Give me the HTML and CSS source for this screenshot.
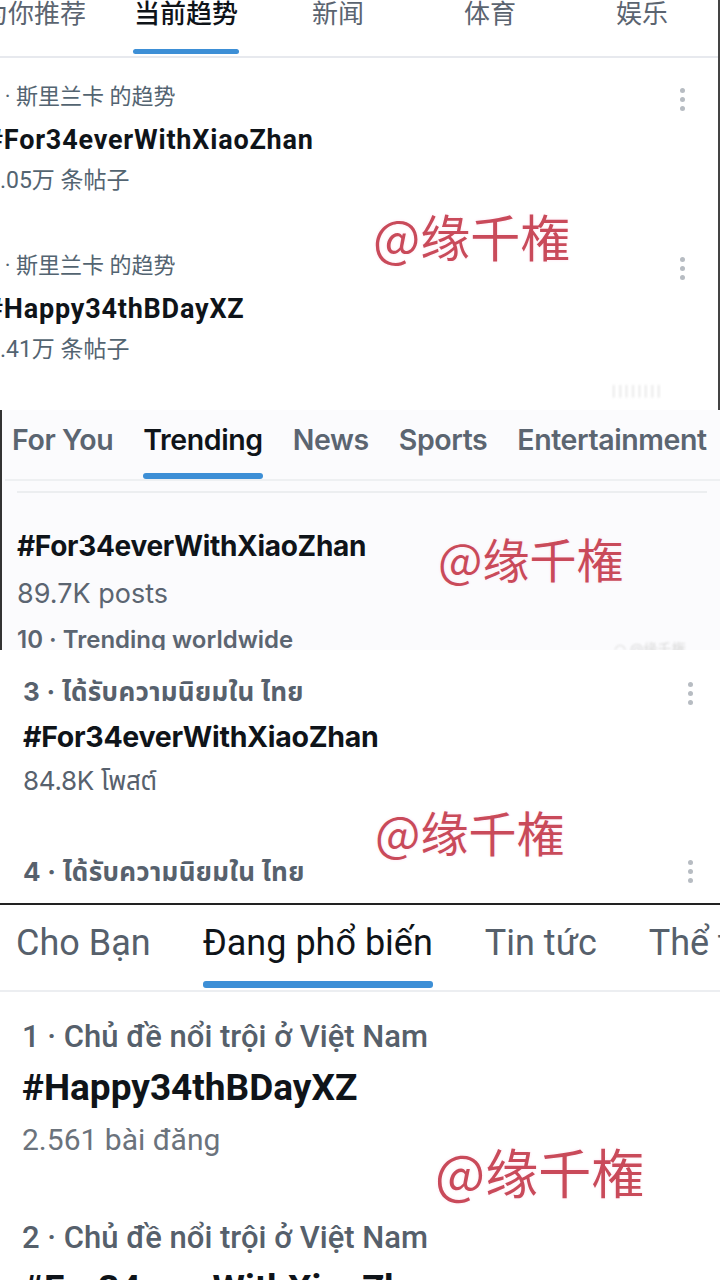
FILE: index.html
```html
<!DOCTYPE html>
<html lang="zh">
<head>
    <meta charset="UTF-8">
    <meta name="viewport" content="width=device-width, initial-scale=1.0">
    <title>Trending collage</title>
    <link rel="stylesheet" href="styles.css">
</head>
<body>

<!-- panel 1: chinese app -->
<section class="panel panel-cn">
    <div class="cn-tabs">
        <div class="cn-tab">为你推荐</div>
        <div class="cn-tab active">当前趋势<span class="bar"></span></div>
        <div class="cn-tab">新闻</div>
        <div class="cn-tab">体育</div>
        <div class="cn-tab">娱乐</div>
    </div>
    <div class="cn-list">
        <div class="cn-item">
            <div class="meta">1 · 斯里兰卡 的趋势</div>
            <div class="tag">#For34everWithXiaoZhan</div>
            <div class="count">2.05万 条帖子</div>
            <span class="dots"><i></i><i></i><i></i></span>
        </div>
        <div class="cn-item">
            <div class="meta">2 · 斯里兰卡 的趋势</div>
            <div class="tag">#Happy34thBDayXZ</div>
            <div class="count">1.41万 条帖子</div>
            <span class="dots"><i></i><i></i><i></i></span>
        </div>
    </div>
    <div class="mark mark-1">@缘千権</div>
    <div class="faint faint-1">||||||||</div>
</section>

<!-- panel 2: english -->
<section class="panel panel-en">
    <div class="en-tabs">
        <div class="en-tab">For You</div>
        <div class="en-tab active">Trending<span class="bar"></span></div>
        <div class="en-tab">News</div>
        <div class="en-tab">Sports</div>
        <div class="en-tab">Entertainment</div>
    </div>
    <div class="en-rule"></div>
    <div class="en-item">
        <div class="tag">#For34everWithXiaoZhan</div>
        <div class="count">89.7K posts</div>
        <div class="meta">10 · Trending worldwide</div>
    </div>
    <div class="mark mark-2">@缘千権</div>
    <div class="faint faint-2">◠ @缘千権</div>
</section>

<!-- panel 3: thai -->
<section class="panel panel-th">
    <div class="th-item">
        <div class="meta">3 · ได้รับความนิยมใน ไทย</div>
        <div class="tag">#For34everWithXiaoZhan</div>
        <div class="count">84.8K โพสต์</div>
        <span class="dots"><i></i><i></i><i></i></span>
    </div>
    <div class="th-item">
        <div class="meta">4 · ได้รับความนิยมใน ไทย</div>
        <span class="dots"><i></i><i></i><i></i></span>
    </div>
    <div class="mark mark-3">@缘千権</div>
</section>

<!-- panel 4: vietnamese -->
<section class="panel panel-vn">
    <div class="vn-tabs">
        <div class="vn-tab">Cho Bạn</div>
        <div class="vn-tab active">Đang phổ biến<span class="bar"></span></div>
        <div class="vn-tab">Tin tức</div>
        <div class="vn-tab">Thể thao</div>
    </div>
    <div class="vn-list">
        <div class="vn-item">
            <div class="meta">1 · Chủ đề nổi trội ở Việt Nam</div>
            <div class="tag">#Happy34thBDayXZ</div>
            <div class="count">2.561 bài đăng</div>
        </div>
        <div class="vn-item">
            <div class="meta">2 · Chủ đề nổi trội ở Việt Nam</div>
            <div class="tag">#For34everWithXiaoZhan</div>
        </div>
    </div>
    <div class="mark mark-4">@缘千権</div>
</section>

</body>
</html>
```

FILE: styles.css
```css
body {
    margin: 0;
    padding: 0;
    width: 720px;
    background-color: #fff;
    font-family: Roboto, "Noto Sans CJK SC", sans-serif;
    color: #0f1419;
}
.panel {
    position: relative;
    overflow: hidden;
    background-color: #fff;
}
.bar {
    display: block;
    flex-shrink: 0;
    height: 6px;
    border-radius: 3px;
    background-color: #3d8fd6;
}
.dots {
    position: absolute;
    display: flex;
    flex-direction: column;
    gap: 4px;
}
.dots i {
    width: 5px;
    height: 5px;
    border-radius: 50%;
    background-color: #b7bcc2;
}
.mark {
    position: absolute;
    font-family: "Noto Sans CJK SC", sans-serif;
    color: #c94a5a;
    text-shadow: 0 0 2px #fff, 0 0 3px #fde;
    white-space: nowrap;
}
.faint {
    position: absolute;
    color: #d8d8d8;
    font-size: 14px;
    filter: blur(1px);
    white-space: nowrap;
}

/* panel 1 */
.panel-cn {
    height: 410px;
    border-right: 2px solid #444;
    box-sizing: border-box;
}
.cn-tabs {
    display: grid;
    grid-template-columns: repeat(5, 152px);
    margin-left: -42px;
    height: 56px;
    border-bottom: 2px solid #e7e9ee;
}
.cn-tab {
    display: flex;
    flex-direction: column;
    align-items: center;
    font-size: 26px;
    line-height: 30px;
    margin-top: -1px;
    color: #5b6470;
}
.cn-tab.active {
    color: #0f1419;
    font-weight: 500;
}
.cn-tab .bar {
    width: 106px;
    margin-top: 20px;
    height: 5px;
}
.cn-list {
    margin-left: -13px;
    padding-top: 25px;
}
.cn-item {
    position: relative;
    height: 169px;
}
.cn-item .meta {
    font-size: 22px;
    line-height: 28px;
    color: #536471;
}
.cn-item .tag {
    font-size: 27px;
    font-weight: 700;
    line-height: 32px;
    letter-spacing: 0.8px;
    margin-top: 13px;
}
.cn-item .count {
    font-size: 23px;
    line-height: 28px;
    margin-top: 11px;
    color: #536471;
}
.cn-item .dots {
    left: 693px;
    top: 5px;
}
.mark-1 {
    left: 373px;
    top: 199px;
    font-size: 50px;
}
.faint-1 {
    left: 612px;
    top: 383px;
    letter-spacing: 3px;
}

/* panel 2 */
.panel-en {
    height: 240px;
    background-color: #fbfbfd;
    border-left: 2px solid #333;
    box-sizing: border-box;
    font-family: Inter, "Noto Sans CJK SC", sans-serif;
}
.en-tabs {
    display: flex;
    gap: 16px;
    margin-left: 3px;
    padding-top: 12px;
    height: 57px;
    border-bottom: 2px solid #eef0f2;
}
.en-tab {
    display: flex;
    flex-direction: column;
    padding: 0 7px;
    font-size: 28.5px;
    font-weight: 600;
    line-height: 36px;
    letter-spacing: -0.4px;
    color: #5b6571;
    white-space: nowrap;
}
.en-tab.active {
    color: #0f1419;
}
.en-tab .bar {
    margin-top: 15px;
}
.en-rule {
    margin: 10px 13px 0 15px;
    border-top: 2px solid #eceef0;
}
.en-item {
    padding-left: 15px;
    padding-top: 36px;
}
.en-item .tag {
    font-size: 28px;
    font-weight: 700;
    line-height: 34px;
    letter-spacing: -0.3px;
}
.en-item .count {
    font-size: 27px;
    line-height: 34px;
    margin-top: 14px;
    color: #5b6571;
}
.en-item .meta {
    font-size: 24px;
    font-weight: 600;
    line-height: 32px;
    margin-top: 13px;
    color: #5b6571;
}
.mark-2 {
    left: 436px;
    top: 113px;
    font-size: 47px;
}
.faint-2 {
    left: 612px;
    top: 228px;
}

/* panel 3 */
.panel-th {
    height: 255px;
    border-bottom: 2px solid #222;
    box-sizing: border-box;
    font-family: Inter, "Noto Sans Thai", "Noto Sans", sans-serif;
}
.th-item {
    position: relative;
    padding-left: 23px;
}
.th-item:first-child {
    padding-top: 26px;
    height: 204px;
    box-sizing: border-box;
}
.th-item .meta {
    font-size: 26px;
    font-weight: 700;
    line-height: 32px;
    letter-spacing: 0.3px;
    color: #57616d;
}
.th-item .tag {
    font-size: 28.5px;
    font-weight: 700;
    line-height: 34px;
    margin-top: 12px;
    letter-spacing: -0.3px;
}
.th-item .count {
    font-size: 26px;
    line-height: 32px;
    margin-top: 11px;
    letter-spacing: -0.3px;
    color: #57616d;
}
.th-item .dots {
    left: 688px;
    top: 32px;
}
.th-item + .th-item .dots {
    top: 6px;
}
.th-item + .th-item {
    padding-top: 2px;
}
.mark-3 {
    left: 375px;
    top: 146px;
    font-size: 48px;
}

/* panel 4 */
.panel-vn {
    height: 375px;
    font-family: Roboto, "Noto Sans", sans-serif;
}
.vn-tabs {
    display: flex;
    gap: 52px;
    padding-left: 16px;
    padding-top: 19px;
    height: 66px;
    border-bottom: 2px solid #eceef1;
}
.vn-tab {
    display: flex;
    flex-direction: column;
    font-size: 36px;
    line-height: 38px;
    color: #56606b;
    white-space: nowrap;
}
.vn-tab.active {
    color: #0f1419;
}
.vn-tab .bar {
    margin-top: 19px;
    height: 7px;
}
.vn-list {
    padding-left: 22px;
    padding-top: 27px;
}
.vn-item {
    height: 201px;
}
.vn-item .meta {
    font-size: 31px;
    font-weight: 500;
    line-height: 36px;
    color: #56606b;
}
.vn-item .tag {
    font-size: 37px;
    font-weight: 700;
    line-height: 42px;
    margin-top: 12px;
}
.vn-item .count {
    font-size: 30px;
    line-height: 36px;
    margin-top: 13px;
    color: #6b737c;
}
.mark-4 {
    left: 435px;
    top: 228px;
    font-size: 53px;
}
```
